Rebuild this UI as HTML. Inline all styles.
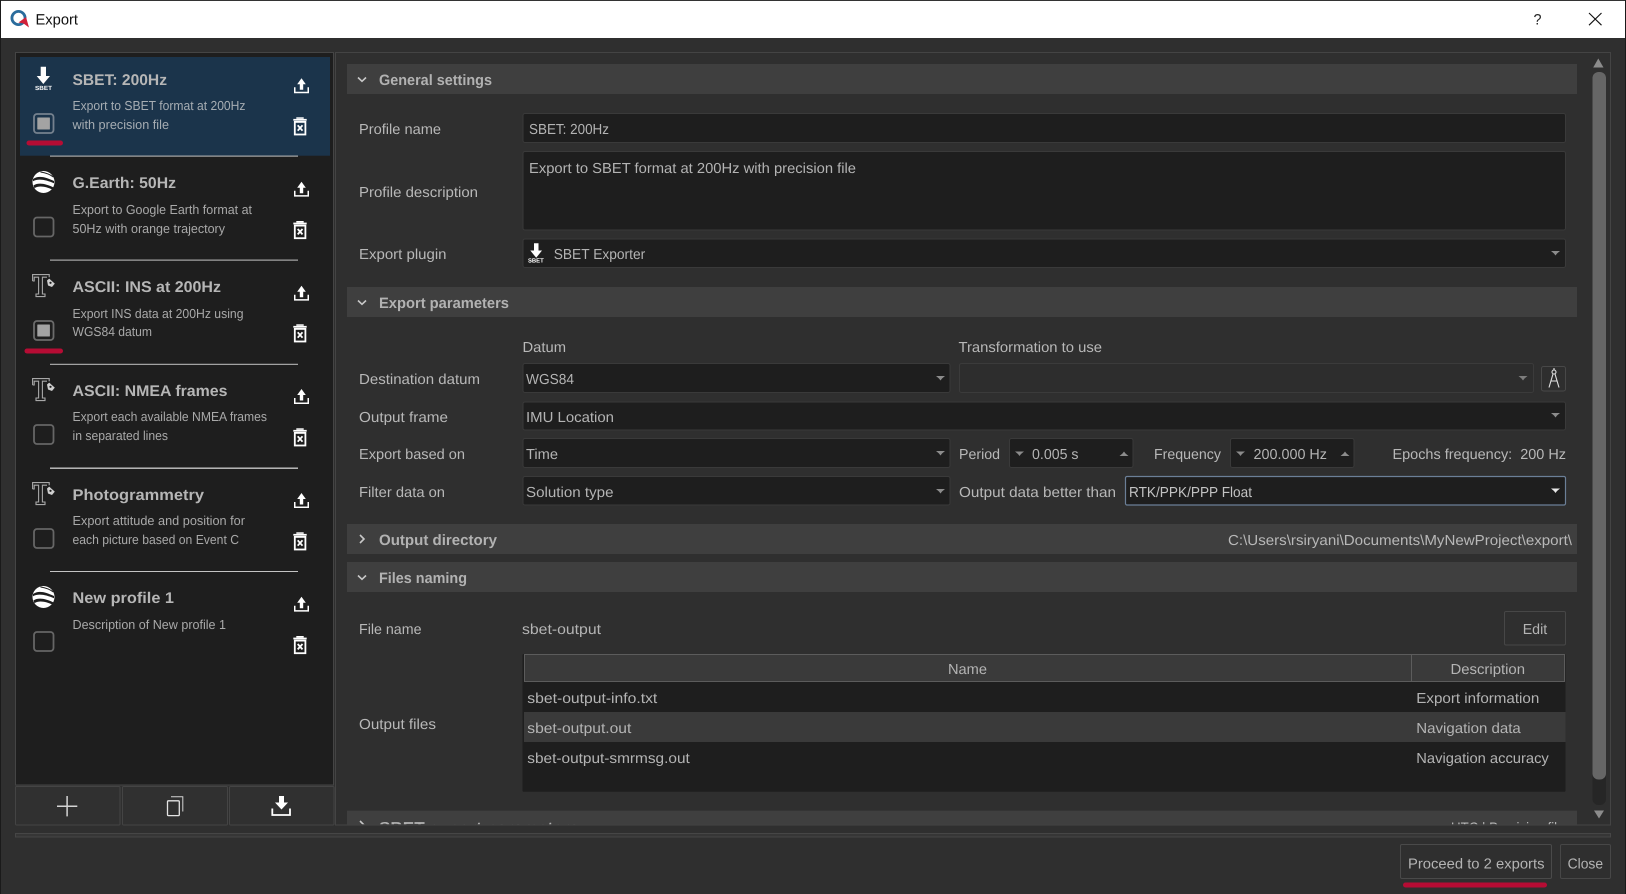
<!DOCTYPE html>
<html><head><meta charset="utf-8"><title>Export</title>
<style>
html,body{margin:0;padding:0;background:#2f2f2f;width:1626px;height:894px;overflow:hidden}
svg{display:block}
text{font-family:"Liberation Sans",sans-serif;text-rendering:geometricPrecision;white-space:pre}
.l{font-size:14.5px;fill:#b8b8b8}
.v{font-size:14.5px;fill:#b4b4b4}
.h{font-size:15px;font-weight:bold;fill:#b2b2b2}
.t{font-size:15.5px;font-weight:bold;fill:#b6b6b6}
.d{font-size:13px;fill:#a9a9a9}
.s{font-size:6px;font-weight:bold;fill:#fff}
.b{fill:#1e1e1e;stroke:#3a3a3a}
.g{fill:#3f3f3f}
.a{fill:#8c8c8c}
</style></head><body>
<svg xmlns="http://www.w3.org/2000/svg" width="1626" height="894" viewBox="0 0 1626 894">
<defs>
<g id="up"><path d="M7.5 0L11.8 6H9.2V11.5H5.8V6H3.2Z" fill="#fff"/><path d="M.75 9V14.2H14.25V9" fill="none" stroke="#fff" stroke-width="1.5"/></g>
<g id="tr"><rect x="3" y="0" width="7.4" height="1.5" fill="#fff"/><rect x="0" y="1.6" width="13.4" height="1.8" fill="#fff"/><rect x="1.5" y="4.6" width="10.6" height="12.6" fill="none" stroke="#fff" stroke-width="1.8"/><path d="M4.4 8L9.2 13.4M9.2 8L4.4 13.4" stroke="#fff" stroke-width="1.8"/></g>
<g id="tt"><path d="M.6 7V.6H17.2V3.2M.6 7H2.2V3.2H6.6V20H4V22.6H13V20H10.4V3.2H15" fill="none" stroke="#a8a8a8" stroke-width="1.1"/><path d="M15 6.5L17.2 4.6L22.8 9.6L20 13L16 11.5Z" fill="#cfcfcf"/><circle cx="18.5" cy="8.8" r="1.1" fill="#1e1e1e"/></g>
<g id="gl"><circle r="11" fill="#fff"/><path d="M-10.5-3C-5-7 2-5 10.5-1L10.5 1.2C3-2-5-4-10.5-.8Z" fill="#1e1e1e"/><path d="M-10 3.5C-5 0 3 2 10 5.5L9 7.6C3 5-4 3-9 6.2Z" fill="#1e1e1e"/><path d="M-3-10C1-9.4 6-8 9.8-5" fill="none" stroke="#1e1e1e" stroke-width=".9"/></g>
<clipPath id="cl"><rect x="336" y="800" width="1275" height="24.3"/></clipPath>
</defs>

<!-- window -->
<rect width="1626" height="894" fill="#2f2f2f"/>
<rect width="1626" height="1" fill="#333"/>
<rect x="0" y="0" width="1" height="894" fill="#1a1a1a"/>
<rect x="1625" y="0" width="1" height="894" fill="#1a1a1a"/>
<rect x="1" y="1" width="1624" height="37" fill="#fff"/>
<circle cx="18.5" cy="18" r="6.6" fill="none" stroke="#2a6c9c" stroke-width="2.8"/>
<path d="M18.5 22.5L26 17L29 27.5L23.5 23.5Z" fill="#d0213a"/>
<text x="35.5" y="24.5" textLength="42.5" lengthAdjust="spacingAndGlyphs" style="font-size:15px;fill:#111">Export</text>
<text x="1533.5" y="24.5" textLength="8" lengthAdjust="spacingAndGlyphs" style="font-size:15px;fill:#222">?</text>
<path d="M1589 13L1601.5 25.2M1601.5 13L1589 25.2" stroke="#111" stroke-width="1.1" fill="none"/>

<!-- left panel -->
<rect x="15.5" y="52.5" width="318" height="732.5" fill="#1e1e1e" stroke="#454545"/>
<rect x="20" y="57" width="310" height="98.7" fill="#1b344b"/>
<g fill="#c4c4c4"><rect x="50" y="155.6" width="248" height="1"/><rect x="50" y="259.6" width="248" height="1"/><rect x="50" y="363.8" width="248" height="1"/><rect x="50" y="467.5" width="248" height="1.4"/><rect x="50" y="571" width="248" height="1"/></g>

<!-- icons in list -->
<path d="M40.7 66.7H46V76H50L43.3 84L36.7 76H40.7Z" fill="#fff"/>
<text class="s" x="35" y="90" textLength="17" lengthAdjust="spacingAndGlyphs">SBET</text>
<use href="#gl" x="43.5" y="182"/>
<use href="#tt" x="32" y="274"/>
<use href="#tt" x="32" y="378"/>
<use href="#tt" x="32" y="482"/>
<use href="#gl" x="43.5" y="597"/>

<!-- checkboxes -->
<g fill="none" stroke-width="1.8">
<rect x="34" y="114" width="19.5" height="19" rx="3" stroke="#75818e"/>
<rect x="34" y="217.5" width="19.5" height="19" rx="3" stroke="#666"/>
<rect x="34" y="321" width="19.5" height="19" rx="3" stroke="#6b6b6b"/>
<rect x="34" y="425" width="19.5" height="19" rx="3" stroke="#666"/>
<rect x="34" y="529" width="19.5" height="19" rx="3" stroke="#666"/>
<rect x="34" y="632" width="19.5" height="19" rx="3" stroke="#666"/>
</g>
<rect x="37.3" y="117.5" width="12.6" height="12" rx=".5" fill="#a3a3a3"/>
<rect x="37.3" y="324.5" width="12.6" height="12" rx=".5" fill="#a3a3a3"/>
<rect x="26.5" y="140.5" width="36.5" height="5" rx="2.5" fill="#b60c34"/>
<rect x="24.5" y="348.5" width="38.5" height="5" rx="2.5" fill="#b60c34"/>

<!-- list text -->
<text class="t" x="72.5" y="85" textLength="94.5" lengthAdjust="spacingAndGlyphs">SBET: 200Hz</text>
<text class="d" x="72.5" y="110" textLength="173" lengthAdjust="spacingAndGlyphs" style="fill:#a6adb3">Export to SBET format at 200Hz</text>
<text class="d" x="72.5" y="129" textLength="96.5" lengthAdjust="spacingAndGlyphs" style="fill:#a6adb3">with precision file</text>
<text class="t" x="72.5" y="188" textLength="103.5" lengthAdjust="spacingAndGlyphs">G.Earth: 50Hz</text>
<text class="d" x="72.5" y="214" textLength="179.5" lengthAdjust="spacingAndGlyphs">Export to Google Earth format at</text>
<text class="d" x="72.5" y="233" textLength="152.5" lengthAdjust="spacingAndGlyphs">50Hz with orange trajectory</text>
<text class="t" x="72.5" y="292" textLength="148.5" lengthAdjust="spacingAndGlyphs">ASCII: INS at 200Hz</text>
<text class="d" x="72.5" y="318" textLength="171" lengthAdjust="spacingAndGlyphs">Export INS data at 200Hz using</text>
<text class="d" x="72.5" y="336" textLength="79.5" lengthAdjust="spacingAndGlyphs">WGS84 datum</text>
<text class="t" x="72.5" y="396" textLength="155" lengthAdjust="spacingAndGlyphs">ASCII: NMEA frames</text>
<text class="d" x="72.5" y="421" textLength="194.5" lengthAdjust="spacingAndGlyphs">Export each available NMEA frames</text>
<text class="d" x="72.5" y="440" textLength="95.5" lengthAdjust="spacingAndGlyphs">in separated lines</text>
<text class="t" x="72.5" y="500" textLength="131.5" lengthAdjust="spacingAndGlyphs">Photogrammetry</text>
<text class="d" x="72.5" y="525" textLength="172.5" lengthAdjust="spacingAndGlyphs">Export attitude and position for</text>
<text class="d" x="72.5" y="544" textLength="166.5" lengthAdjust="spacingAndGlyphs">each picture based on Event C</text>
<text class="t" x="72.5" y="603" textLength="101.5" lengthAdjust="spacingAndGlyphs">New profile 1</text>
<text class="d" x="72.5" y="629" textLength="153.5" lengthAdjust="spacingAndGlyphs">Description of New profile 1</text>

<!-- list action icons -->
<use href="#up" x="294" y="78.3"/><use href="#tr" x="293.3" y="117.3"/>
<use href="#up" x="294" y="181.7"/><use href="#tr" x="293.3" y="221"/>
<use href="#up" x="294" y="285.7"/><use href="#tr" x="293.3" y="324.3"/>
<use href="#up" x="294" y="389"/><use href="#tr" x="293.3" y="428.3"/>
<use href="#up" x="294" y="493"/><use href="#tr" x="293.3" y="532.3"/>
<use href="#up" x="294" y="596.7"/><use href="#tr" x="293.3" y="636"/>

<!-- left bottom buttons -->
<g fill="#303030" stroke="#444"><rect x="15.5" y="786.5" width="104.5" height="38.5" rx="1"/><rect x="122.5" y="786.5" width="105" height="38.5" rx="1"/><rect x="229.5" y="786.5" width="104.5" height="38.5" rx="1"/></g>
<path d="M57 806.2H77.3M67.1 796V816.4" stroke="#d4d4d4" stroke-width="1.5" fill="none"/>
<rect x="167.5" y="800.8" width="11.8" height="14.8" rx="1" fill="none" stroke="#e4e4e4" stroke-width="1.3"/>
<path d="M171 796.8H182.8V811.5" fill="none" stroke="#d4d4d4" stroke-width="1"/>
<path d="M279 796H284V802.5H288L281.5 809.5L275 802.5H279Z" fill="#fff"/>
<path d="M272.3 808.5V815H290V808.5" fill="none" stroke="#fff" stroke-width="1.8"/>

<!-- splitter -->
<rect x="15.5" y="833.5" width="1595" height="3.5" fill="#363636" stroke="#464646"/>

<!-- right panel -->
<rect x="335.5" y="52.5" width="1275" height="772.5" fill="#2f2f2f" stroke="#444"/>

<!-- headers -->
<rect class="g" x="347" y="64" width="1230" height="30"/>
<rect class="g" x="347" y="287" width="1230" height="30"/>
<rect class="g" x="347" y="524" width="1230" height="30"/>
<rect class="g" x="347" y="562" width="1230" height="30"/>
<g fill="none" stroke="#c8c8c8" stroke-width="1.6">
<path d="M358 77.5L362 81.3L366 77.5"/>
<path d="M358 300.5L362 304.3L366 300.5"/>
<path d="M360 535L364 539L360 543"/>
<path d="M358 575.5L362 579.3L366 575.5"/>
</g>
<text class="h" x="379" y="85" textLength="113" lengthAdjust="spacingAndGlyphs">General settings</text>
<text class="h" x="379" y="308" textLength="130" lengthAdjust="spacingAndGlyphs">Export parameters</text>
<text class="h" x="379" y="545" textLength="118" lengthAdjust="spacingAndGlyphs">Output directory</text>
<text class="h" x="379" y="583" textLength="88" lengthAdjust="spacingAndGlyphs">Files naming</text>
<text class="l" x="1228" y="545" textLength="344" lengthAdjust="spacingAndGlyphs">C:\Users\rsiryani\Documents\MyNewProject\export\</text>

<!-- general settings -->
<text class="l" x="359" y="134" textLength="82" lengthAdjust="spacingAndGlyphs">Profile name</text>
<text class="l" x="359" y="197" textLength="119" lengthAdjust="spacingAndGlyphs">Profile description</text>
<text class="l" x="359" y="259" textLength="87.5" lengthAdjust="spacingAndGlyphs">Export plugin</text>
<rect class="b" x="523" y="113.5" width="1042.5" height="29" rx="2"/>
<rect class="b" x="523" y="151.5" width="1042.5" height="78.5" rx="2"/>
<rect class="b" x="523" y="239" width="1042.5" height="28.5" rx="2"/>
<text class="v" x="529" y="134" textLength="80" lengthAdjust="spacingAndGlyphs">SBET: 200Hz</text>
<text class="v" x="529" y="173" textLength="327" lengthAdjust="spacingAndGlyphs">Export to SBET format at 200Hz with precision file</text>
<path d="M534 243.3H538.5V250.5H542L536.2 257.8L530.3 250.5H534Z" fill="#fff"/>
<text class="s" x="528" y="262.7" textLength="15.7" lengthAdjust="spacingAndGlyphs">SBET</text>
<text class="v" x="553.7" y="259" textLength="91.5" lengthAdjust="spacingAndGlyphs">SBET Exporter</text>
<path class="a" d="M1551 251H1560L1557 253.5L1555.5 255.5L1554 253.5Z"/>

<!-- export parameters -->
<text class="l" x="522.5" y="352" textLength="43.5" lengthAdjust="spacingAndGlyphs">Datum</text>
<text class="l" x="958.5" y="352" textLength="143.5" lengthAdjust="spacingAndGlyphs">Transformation to use</text>
<text class="l" x="359" y="384" textLength="121" lengthAdjust="spacingAndGlyphs">Destination datum</text>
<text class="l" x="359" y="422" textLength="89" lengthAdjust="spacingAndGlyphs">Output frame</text>
<text class="l" x="359" y="459" textLength="106" lengthAdjust="spacingAndGlyphs">Export based on</text>
<text class="l" x="359" y="497" textLength="86" lengthAdjust="spacingAndGlyphs">Filter data on</text>

<rect class="b" x="523" y="363.5" width="427" height="29" rx="2"/>
<rect x="959.5" y="363.5" width="574" height="29" rx="2" fill="#2d2d2d" stroke="#3b3b3b"/>
<rect x="1541.5" y="366.5" width="24" height="24.5" rx="2" fill="#2e2e2e" stroke="#484848"/>
<g fill="none" stroke="#e0e0e0" stroke-width="1.1"><circle cx="1554" cy="372" r="2"/><path d="M1553 374L1549 387.5M1555 374L1559 387.5M1550.5 381H1557.5M1554 368V370"/></g>
<rect class="b" x="523" y="402" width="1042.5" height="28" rx="2"/>
<rect class="b" x="523" y="438.5" width="427" height="29" rx="2"/>
<rect class="b" x="523" y="476.5" width="427" height="28.5" rx="2"/>
<rect x="1125.5" y="476.5" width="440" height="28.5" rx="1.5" fill="#1e1e1e" stroke="#6b7f97" stroke-width="1.2"/>
<rect class="b" x="1009.5" y="438.5" width="123.5" height="29" rx="2"/>
<rect class="b" x="1230.5" y="438.5" width="123.5" height="29" rx="2"/>

<text class="v" x="526" y="384" textLength="48" lengthAdjust="spacingAndGlyphs">WGS84</text>
<text class="v" x="526" y="422" textLength="88" lengthAdjust="spacingAndGlyphs">IMU Location</text>
<text class="v" x="526" y="459" textLength="32" lengthAdjust="spacingAndGlyphs">Time</text>
<text class="v" x="526" y="497" textLength="87.5" lengthAdjust="spacingAndGlyphs">Solution type</text>
<text class="l" x="959" y="459" textLength="41" lengthAdjust="spacingAndGlyphs">Period</text>
<text class="v" x="1032" y="459" textLength="46.5" lengthAdjust="spacingAndGlyphs">0.005 s</text>
<text class="l" x="1154" y="459" textLength="67" lengthAdjust="spacingAndGlyphs">Frequency</text>
<text class="v" x="1253.5" y="459" textLength="73.5" lengthAdjust="spacingAndGlyphs">200.000 Hz</text>
<text class="l" x="1392.5" y="459" textLength="173.5" lengthAdjust="spacingAndGlyphs">Epochs frequency:  200 Hz</text>
<text class="l" x="959" y="497" textLength="157" lengthAdjust="spacingAndGlyphs">Output data better than</text>
<text class="v" x="1129" y="497" textLength="123" lengthAdjust="spacingAndGlyphs" style="fill:#c2c2c2">RTK/PPK/PPP Float</text>

<g class="a">
<path d="M936 376H945L942 378.5L940.5 380.5L939 378.5Z"/>
<path d="M1518.5 376H1527.5L1524.5 378.5L1523 380.5L1521.5 378.5Z" fill="#7d7d7d"/>
<path d="M1551 413H1560L1557 415.5L1555.5 417.5L1554 415.5Z"/>
<path d="M936 451H945L942 453.5L940.5 455.5L939 453.5Z"/>
<path d="M936 489H945L942 491.5L940.5 493.5L939 491.5Z"/>
<path d="M1015 451.5H1024L1021 454L1019.5 456L1018 454Z"/>
<path d="M1236 451.5H1245L1242 454L1240.5 456L1239 454Z"/>
<path d="M1119.5 456H1128.5L1125.5 453.5L1124 451.5L1122.5 453.5Z"/>
<path d="M1340.5 456H1349.5L1346.5 453.5L1345 451.5L1343.5 453.5Z"/>
</g>
<path d="M1551 488.5H1560L1557 491L1555.5 493L1554 491Z" fill="#e8e8e8"/>

<!-- files naming -->
<text class="l" x="359" y="634" textLength="62.5" lengthAdjust="spacingAndGlyphs">File name</text>
<text class="v" x="522" y="634" textLength="79" lengthAdjust="spacingAndGlyphs">sbet-output</text>
<rect x="1504.5" y="611.5" width="61" height="33.5" rx="1.5" fill="#2f2f2f" stroke="#474747"/>
<text class="v" x="1522.7" y="634" textLength="24.5" lengthAdjust="spacingAndGlyphs">Edit</text>
<text class="l" x="359" y="729" textLength="77" lengthAdjust="spacingAndGlyphs">Output files</text>

<rect x="522.5" y="654" width="1043" height="137.7" rx="1" fill="#1e1e1e"/>
<rect x="524.5" y="654.5" width="887" height="27" fill="#3a3a3a" stroke="#5c5c5c"/>
<rect x="1411.5" y="654.5" width="153" height="27" fill="#3a3a3a" stroke="#5c5c5c"/>
<rect x="524" y="712" width="1041.5" height="30" fill="#3a3a3a"/>
<text class="v" x="948" y="674" textLength="39" lengthAdjust="spacingAndGlyphs">Name</text>
<text class="v" x="1450.5" y="674" textLength="74.5" lengthAdjust="spacingAndGlyphs">Description</text>
<text class="v" x="527.3" y="703" textLength="130" lengthAdjust="spacingAndGlyphs">sbet-output-info.txt</text>
<text class="v" x="527.3" y="733" textLength="104" lengthAdjust="spacingAndGlyphs">sbet-output.out</text>
<text class="v" x="527.3" y="763" textLength="162.5" lengthAdjust="spacingAndGlyphs">sbet-output-smrmsg.out</text>
<text class="v" x="1416.3" y="703" textLength="123" lengthAdjust="spacingAndGlyphs">Export information</text>
<text class="v" x="1416.3" y="733" textLength="104.5" lengthAdjust="spacingAndGlyphs">Navigation data</text>
<text class="v" x="1416.3" y="763" textLength="132.5" lengthAdjust="spacingAndGlyphs">Navigation accuracy</text>

<!-- clipped header -->
<rect class="g" x="347" y="810.7" width="1230" height="14"/>
<g clip-path="url(#cl)">
<path d="M360 821L364 825L360 829" fill="none" stroke="#c8c8c8" stroke-width="1.6"/>
<text class="h" x="379" y="832.7" textLength="200" lengthAdjust="spacingAndGlyphs">SBET export parameters</text>
<text class="l" x="1451" y="832.7" textLength="113.5" lengthAdjust="spacingAndGlyphs">UTC | Precision file</text>
</g>

<!-- scrollbar -->
<rect x="1592.5" y="72" width="13.5" height="733" rx="6" fill="#262626"/>
<rect x="1592.5" y="72" width="13.5" height="707.5" rx="6" fill="#666"/>
<path d="M1598.3 58.5L1603.5 67.5H1593.2Z" fill="#8c8c8c"/>
<path d="M1594 810.5H1604L1599 818.5Z" fill="#8c8c8c"/>

<!-- dialog buttons -->
<rect x="1400.5" y="844.5" width="151" height="34" rx="1.5" fill="#2f2f2f" stroke="#4a4a4a"/>
<rect x="1560.5" y="844.5" width="50" height="34" rx="1.5" fill="#2f2f2f" stroke="#474747"/>
<text class="v" x="1408" y="868.3" textLength="136.5" lengthAdjust="spacingAndGlyphs">Proceed to 2 exports</text>
<text class="v" x="1567.6" y="868.3" textLength="35.5" lengthAdjust="spacingAndGlyphs">Close</text>
<rect x="1403" y="882.5" width="144" height="5" rx="2.5" fill="#b60c34"/>
</svg>
</body></html>
